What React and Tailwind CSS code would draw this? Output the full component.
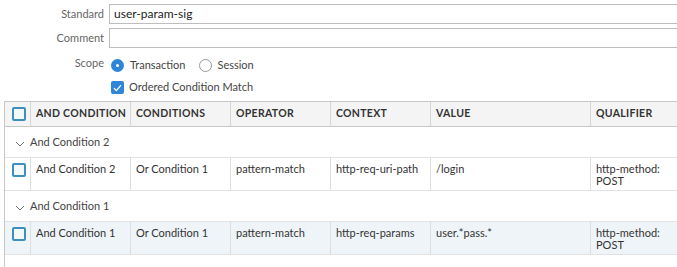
import React from "react";

const cols = [100, 100, 100, 100, 160, 120];

function Box() {
  return <span className="block w-[14px] h-[14px] rounded-[2px] border-2 border-[#3d8fc2] bg-[#f3f8fb]" />;
}

function HeaderRow() {
  const names = ["AND CONDITION", "CONDITIONS", "OPERATOR", "CONTEXT", "VALUE", "QUALIFIER"];
  return (
    <div className="flex h-[26px] border-t border-b border-[#c8c8c8] bg-[#f4f4f4]">
      <div className="w-[26px] shrink-0 flex items-center pl-[7px] border-r border-[#d6d6d6]"><Box /></div>
      {names.map((n, i) => (
        <div key={n} style={{ width: cols[i] }} className="shrink-0 flex items-center pl-[5px] border-r border-[#d6d6d6] text-[10.5px] font-bold tracking-[0.3px] whitespace-nowrap overflow-hidden text-[#333]">
          {n}
        </div>
      ))}
    </div>
  );
}

function GroupRow({ label }) {
  return (
    <div className="flex items-center h-[31px] border-b border-[#e2e2e2] text-[11px] text-[#444]">
      <svg width="10" height="6" viewBox="0 0 10 6" className="ml-[10px] mr-[5px] mt-[3px]">
        <path d="M1 1 L5 5 L9 1" fill="none" stroke="#777" strokeWidth="1" />
      </svg>
      {label}
    </div>
  );
}

function DataRow({ cells, bg }) {
  return (
    <div className={`flex h-[33px] border-b border-[#e2e2e2] text-[11px] text-[#333] ${bg}`}>
      <div className="w-[26px] shrink-0 pl-[7px] pt-[5px] border-r border-[#dedede]"><Box /></div>
      {cells.map((c, i) => (
        <div key={i} style={{ width: cols[i] }} className="shrink-0 pl-[5px] pt-[5px] leading-[12px] border-r border-[#dedede] whitespace-nowrap">
          {c}
        </div>
      ))}
    </div>
  );
}

export default function App() {
  return (
    <div className="w-[677px] h-[267px] overflow-hidden bg-white" style={{ fontFamily: "Lato, 'Open Sans', sans-serif" }}>
      <div className="w-[760px]">
        <div className="pt-[4px] flex flex-col gap-[4px]">
          <div className="flex items-center">
            <div className="w-[104px] text-right text-[11px] text-[#666]">Standard</div>
            <div className="ml-[5px] flex-1 h-[20px] border border-[#bdbdbd] flex items-center pl-[4px] text-[12px] text-[#222]">user-param-sig</div>
          </div>
          <div className="flex items-center">
            <div className="w-[104px] text-right text-[11px] text-[#666]">Comment</div>
            <div className="ml-[5px] flex-1 h-[20px] border border-[#bdbdbd]" />
          </div>
        </div>
        <div className="flex items-center mt-[10px] h-[14px]">
          <div className="w-[104px] text-right text-[11px] text-[#666] -mt-[3px]">Scope</div>
          <span className="ml-[7px] w-[13px] h-[13px] rounded-full bg-[#2f86d9] flex items-center justify-center">
            <span className="w-[3px] h-[3px] rounded-full bg-white" />
          </span>
          <span className="ml-[6px] text-[11px] text-[#444]">Transaction</span>
          <span className="ml-[14px] w-[13px] h-[13px] rounded-full border border-[#9a9a9a] bg-white" />
          <span className="ml-[5px] text-[11px] text-[#444]">Session</span>
        </div>
        <div className="flex items-center mt-[9px] h-[13px] pl-[111px]">
          <span className="w-[13px] h-[13px] rounded-[2px] bg-[#2f86d9] flex items-center justify-center">
            <svg width="9" height="8" viewBox="0 0 9 8">
              <path d="M1 4.2 L3.4 6.6 L8 1.2" fill="none" stroke="white" strokeWidth="1.3" />
            </svg>
          </span>
          <span className="ml-[5px] text-[11px] text-[#444]">Ordered Condition Match</span>
        </div>
        <div className="mt-[7px] ml-[4px] border-l border-[#c8c8c8] h-[200px]">
          <HeaderRow />
          <GroupRow label="And Condition 2" />
          <DataRow bg="bg-white" cells={["And Condition 2", "Or Condition 1", "pattern-match", "http-req-uri-path", "/login", <span>http-method:<br />POST</span>]} />
          <GroupRow label="And Condition 1" />
          <DataRow bg="bg-[#eef4f7]" cells={["And Condition 1", "Or Condition 1", "pattern-match", "http-req-params", "user.*pass.*", <span>http-method:<br />POST</span>]} />
        </div>
      </div>
    </div>
  );
}
